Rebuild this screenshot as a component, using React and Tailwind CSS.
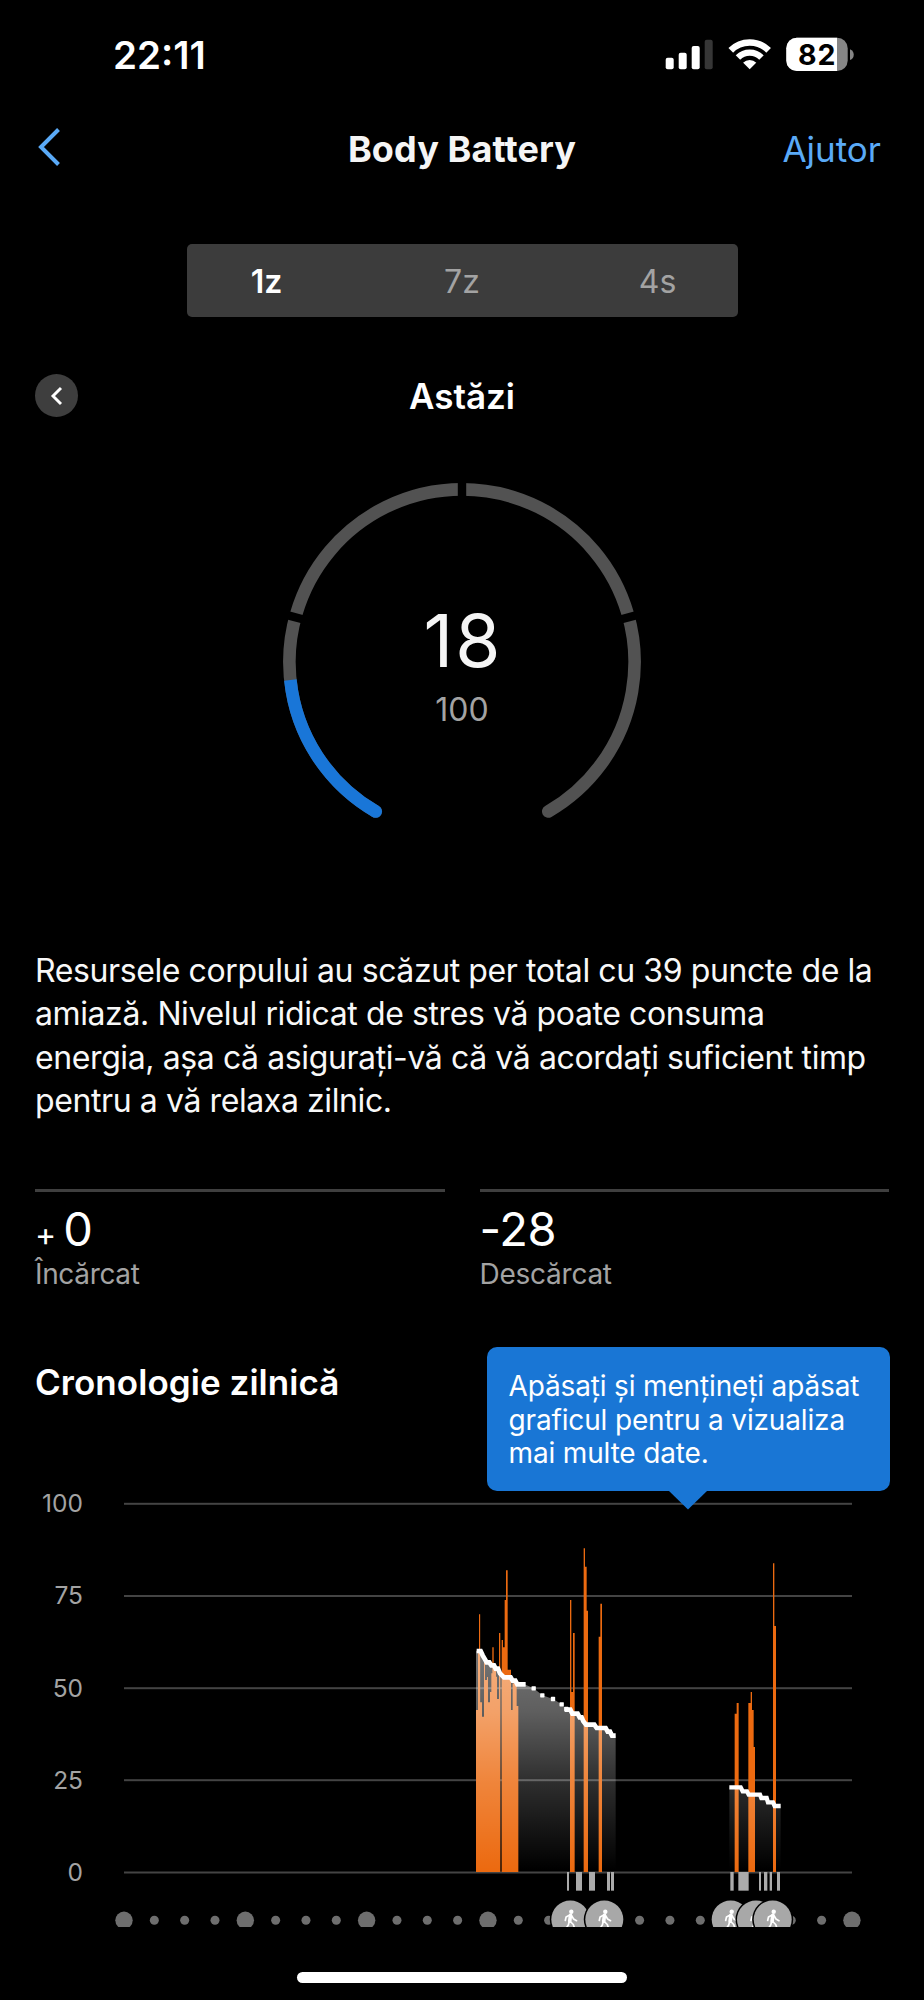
import React from "react";

const HOURS = Array.from({ length: 25 }, (_, i) => i);

// Stress bars as [x, width, top]; the drawing unit is a third of a pixel.
const MORNING_BARS = [
  [48, 6, 540], [54, 3, 362], [57, 3.5, 253], [60.5, 5.5, 517], [66, 6, 560], [72, 3, 390],
  [75, 6, 450], [81, 3, 441], [84, 6, 517], [90, 4, 486], [94, 3, 430], [97, 4, 352],
  [101, 7, 405], [108, 3, 440], [111, 6, 507], [117, 4, 309], [125, 4, 330], [129, 5, 352],
  [134, 4, 210], [138, 5, 121], [143, 10, 419], [153, 5, 540], [158, 12, 460], [170, 5, 528],
  [330, 4, 210], [334, 5, 486], [339, 5, 309], [371, 4, 55], [375, 5, 110], [380, 4, 242],
  [416, 5, 320], [421, 5, 221],
];
const EVENING_BARS = [
  [104, 6, 551], [110, 6, 519], [145, 7, 519], [152, 4, 486], [156, 5, 540], [161, 4, 651],
  [219, 4, 100], [223, 5, 288],
];
const MORNING_TICKS = [[321, 6], [348, 18], [387, 18], [441, 9], [453, 9]];
const EVENING_TICKS = [[91, 10], [115, 31], [177, 6], [192, 10], [209, 7], [231, 9]];
const DOTS = [[221, 475], [247, 496], [279, 507], [305, 523], [319, 537]];

// Joins neighbouring bars into one stepped outline so no seams show between them.
function stepPath(bars) {
  let d = "";
  let end = null;
  bars.forEach(([x, w, top]) => {
    if (x !== end) d += end === null ? `M${x} 1026` : `V1026ZM${x} 1026`;
    d += `V${top}H${x + w}`;
    end = x + w;
  });
  return `${d}V1026Z`;
}

function Bars({ data }) {
  return <path d={stepPath(data)} fill="#ec6a10" />;
}

function Ticks({ data }) {
  return data.map(([x, w]) => <rect key={x} x={x} y={1026} width={w} height={56} fill="#ababab" />);
}

function Activity({ x }) {
  return (
    <g>
      <circle cx={x} cy="429.5" r="20.5" fill="#000" />
      <circle cx={x} cy="429.5" r="19" fill="#a8a8a8" />
      <g transform={`translate(${x} 429.5)`}>
        <circle cx="1" cy="-7.8" r="2.2" fill="#fff" />
        <path d="M0.2 -4.2L-0.6 1.8" stroke="#fff" strokeWidth="3.6" strokeLinecap="round" />
        <path
          d="M-0.5 -4.5L-4.2 -2.6L-5 1M1.5 -3.6L3.3 -0.5L6.2 1.2M-1 2L-2 5.5L-4.6 9.500M0 2L3 5L4.500 9.500"
          fill="none" stroke="#fff" strokeWidth="1.7" strokeLinecap="round" strokeLinejoin="round"
        />
      </g>
    </g>
  );
}

function Chart() {
  return (
    <svg width="780" height="437" viewBox="0 0 780 437" className="block">
      <defs>
        <linearGradient id="fade" gradientUnits="userSpaceOnUse" x1="0" y1="362" x2="0" y2="1020">
          <stop offset="0" stopColor="#fff" stopOpacity="0.46" />
          <stop offset="0.28" stopColor="#fff" stopOpacity="0.37" />
          <stop offset="0.6" stopColor="#fff" stopOpacity="0.18" />
          <stop offset="1" stopColor="#fff" stopOpacity="0" />
        </linearGradient>
      </defs>
      {[12.8, 105, 197.2, 289.2, 381.5].map((y) => (
        <rect key={y} x="14" y={y} width="728" height="2" fill="#444" />
      ))}
      <g transform="translate(350 40) scale(0.33333)">
        <Bars data={MORNING_BARS} />
        <path
          d="M48 362H62L75 388L100 406L122 430L132 442H152L160 450L172 463H193L221 475L247 496L279 507L305 523L319 537L332 541L340 550L352 552L375 578L385 585H403L412 594H437L450 608L457 617H467V1026H48Z"
          fill="url(#fade)"
        />
        <path
          d="M50 363H62L68 376L75 388L80 397H88L94 406H102L107 416H114L120 430L132 442H152L158 452H166L172 463H197"
          fill="none" stroke="#fff" strokeWidth="14" strokeLinejoin="miter"
        />
        {DOTS.map(([x, y]) => (
          <rect key={x} x={x - 6.5} y={y - 6.5} width="13" height="13" rx="2" fill="#fff" />
        ))}
        <path
          d="M314 539H331L337 551H353L359 562H365L370 574L378 584H403L410 594H437L443 605H450L456 617H467"
          fill="none" stroke="#fff" strokeWidth="14" strokeLinejoin="miter"
        />
        <Ticks data={MORNING_TICKS} />
      </g>
      <g transform="translate(590 40) scale(0.33333)">
        <Bars data={EVENING_BARS} />
        <path
          d="M88 772H122L130 784H141L148 794H178L184 804H198L206 817H218L224 828H242V1026H88Z"
          fill="url(#fade)"
        />
        <path
          d="M88 772H122L128 784H141L146 794H180L184 804H200L204 817H219L224 828H242"
          fill="none" stroke="#fff" strokeWidth="13" strokeLinejoin="miter"
        />
        <Ticks data={EVENING_TICKS} />
      </g>
      {HOURS.map((h) => (
        <circle key={h} cx={14 + h * 30.33} cy="430.3" r={h % 4 ? 4.5 : 8.7} fill="#6e6e6e" />
      ))}
      {[460.3, 494.3, 620.7, 646, 662.7].map((x) => (
        <Activity key={x} x={x} />
      ))}
    </svg>
  );
}

function Gauge() {
  return (
    <svg width="380" height="380" viewBox="0 0 380 380" className="block">
      <g fill="none" strokeWidth="12.6">
        <path d="M276.3 339.5A172.6 172.6 0 1 0 103.7 339.5" stroke="#525252" strokeLinecap="round" />
        <path d="M103.7 339.5A172.6 172.6 0 0 1 18.35 208" stroke="#1976d8" />
        <path d="M103.7 339.5h0.01" stroke="#1976d8" strokeLinecap="round" />
      </g>
      <g fill="#000">
        <rect x="185.8" y="8" width="8.4" height="18" />
        <rect x="185.8" y="8" width="8.4" height="18" transform="rotate(75 190 190)" />
        <rect x="185.8" y="8" width="8.4" height="18" transform="rotate(-75 190 190)" />
      </g>
    </svg>
  );
}

function StatusIcons() {
  return (
    <svg width="192" height="36" viewBox="0 0 192 36" className="block">
      <defs>
        <clipPath id="wedge"><path d="M87.7 33.3l-24-24V-10h48V9.3z" /></clipPath>
        <clipPath id="cell"><rect x="124.3" y="1.7" width="61.4" height="33.3" rx="10.5" /></clipPath>
      </defs>
      <g fill="#fff">
        <rect x="3.7" y="21.7" width="8" height="11.6" rx="2" />
        <rect x="16.7" y="16.7" width="8" height="16.6" rx="2" />
        <rect x="29.7" y="10" width="8" height="23.3" rx="2" />
        <rect x="42.7" y="3.7" width="8" height="29.6" rx="2" fill="#363636" />
      </g>
      <g clipPath="url(#wedge)" fill="none" stroke="#fff">
        <circle cx="87.7" cy="33.3" r="26.8" strokeWidth="6.6" />
        <circle cx="87.7" cy="33.3" r="16.6" strokeWidth="6.2" />
        <circle cx="87.7" cy="33.3" r="4.7" strokeWidth="9.4" />
      </g>
      <g clipPath="url(#cell)">
        <rect x="124" y="1" width="62" height="35" fill="#868686" />
        <rect x="124" y="1" width="51" height="35" fill="#fff" />
      </g>
      <path d="M188 13.3c5 1.7 5 9 0 10.7z" fill="#868686" />
      <text x="136" y="28.7" fontSize="28.5" fontWeight="700" textLength="37.5" fill="#000" fontFamily="Inter, sans-serif">82</text>
    </svg>
  );
}

export default function App() {
  return (
    <div className="relative flex h-[2000px] w-[924px] flex-col overflow-hidden bg-black font-['Inter',sans-serif] text-white">
      <header className="flex h-[100px] items-center justify-between pr-[70px] pl-[113px] pt-2">
        <span className="pt-[3px] text-[38.5px] leading-none font-semibold">22:11</span>
        <StatusIcons />
      </header>
      <nav className="grid h-[100px] grid-cols-[1fr_auto_1fr] items-center px-[36px]">
        <svg width="26" height="40" viewBox="0 0 26 40" className="mb-[7px]">
          <path d="M22.5 2.5L5 20L22.5 37.5" fill="none" stroke="#5aaaf7" strokeWidth="4" />
        </svg>
        <h1 className="pb-[2px] text-[36px] leading-none font-bold tracking-[0.1px] text-[#f5f5f5]">Body Battery</h1>
        <a className="justify-self-end pr-[7px] pb-[2px] text-[35px] leading-none text-[#5aaaf7]">Ajutor</a>
      </nav>
      <div className="mx-auto mt-[44px] grid h-[73px] w-[551px] grid-cols-[160px_1fr_160px] items-center rounded-[5px] bg-[#3c3c3c] pt-[2px] text-center text-[32px] text-[#a3a3a3]">
        <span className="font-semibold text-white">1z</span>
        <span>7z</span>
        <span>4s</span>
      </div>
      <div className="mt-[57px] grid h-[43px] grid-cols-[43px_1fr_43px] items-center px-[35px]">
        <span className="flex size-[43px] items-center justify-center rounded-full bg-[#3e3e3e]">
          <svg width="14" height="20" viewBox="0 0 14 20">
            <path d="M11 2L3 10L11 18" fill="none" stroke="#fff" strokeWidth="2.9" />
          </svg>
        </span>
        <h2 className="pt-[2px] text-center text-[35px] leading-none font-semibold">Astăzi</h2>
      </div>
      <div className="mx-auto mt-[55px] grid h-[380px] w-[380px]">
        <div className="col-start-1 row-start-1"><Gauge /></div>
        <div className="col-start-1 row-start-1 flex flex-col items-center pt-[133px]">
          <span className="pl-[2px] text-[73px] leading-[72px] tracking-[2px] text-[#f5f5f5]">18</span>
          <span className="mt-[17px] text-[32px] leading-[32px] text-[#a3a3a3]">100</span>
        </div>
      </div>
      <p className="mt-[97px] px-[35px] text-[32px] leading-[43.3px] tracking-[-0.4px] whitespace-nowrap text-[#f8f8f8]">
        Resursele corpului au scăzut per total cu 39 puncte de la<br />
        amiază. Nivelul ridicat de stres vă poate consuma<br />
        energia, așa că asigurați-vă că vă acordați suficient timp<br />
        pentru a vă relaxa zilnic.
      </p>
      <div className="mt-[67px] grid grid-cols-2 gap-[35px] px-[35px]">
        <div className="border-t-[3px] border-[#3f3f3f]">
          <div className="mt-[12px] flex h-[50px] items-baseline leading-[50px]">
            <span className="text-[32px]">+</span>
            <span className="ml-[7px] text-[47px]">0</span>
          </div>
          <div className="mt-[3px] text-[28px] leading-[34px] tracking-[-0.35px] text-[#a3a3a3]">Încărcat</div>
        </div>
        <div className="border-t-[3px] border-[#3f3f3f]">
          <div className="mt-[12px] h-[50px] text-[47px] leading-[50px] tracking-[-0.4px]">-28</div>
          <div className="mt-[3px] text-[28px] leading-[34px] tracking-[-0.25px] text-[#a3a3a3]">Descărcat</div>
        </div>
      </div>
      <div className="relative mt-[56px] h-[143px] px-[35px]">
        <h3 className="pt-[17px] text-[35px] leading-[36px] font-semibold tracking-[0.05px]">Cronologie zilnică</h3>
        <div className="absolute top-0 right-[34.5px] z-10 h-[144px] w-[403px] rounded-[10px] bg-[#1976d5] pt-[23px] pl-[22px] text-[28px] leading-[33.6px] tracking-[-0.15px] whitespace-nowrap">
          Apăsați și mențineți apăsat<br />graficul pentru a vizualiza<br />mai multe date.
          <svg width="40" height="20" viewBox="0 0 40 20" className="absolute top-[143px] left-[181px]">
            <path d="M0 0H40L20 19.5Z" fill="#1976d5" />
          </svg>
        </div>
      </div>
      <div className="flex h-[437px]">
        <div className="-mt-[33px] flex w-[110px] flex-col pr-[27px] text-right text-[24.5px] leading-[92.2px] text-[#a3a3a3]">
          <span>100</span>
          <span>75</span>
          <span>50</span>
          <span>25</span>
          <span>0</span>
        </div>
        <Chart />
      </div>
      <div className="mx-auto mt-[45px] h-[11px] w-[330px] rounded-full bg-white" />
    </div>
  );
}
